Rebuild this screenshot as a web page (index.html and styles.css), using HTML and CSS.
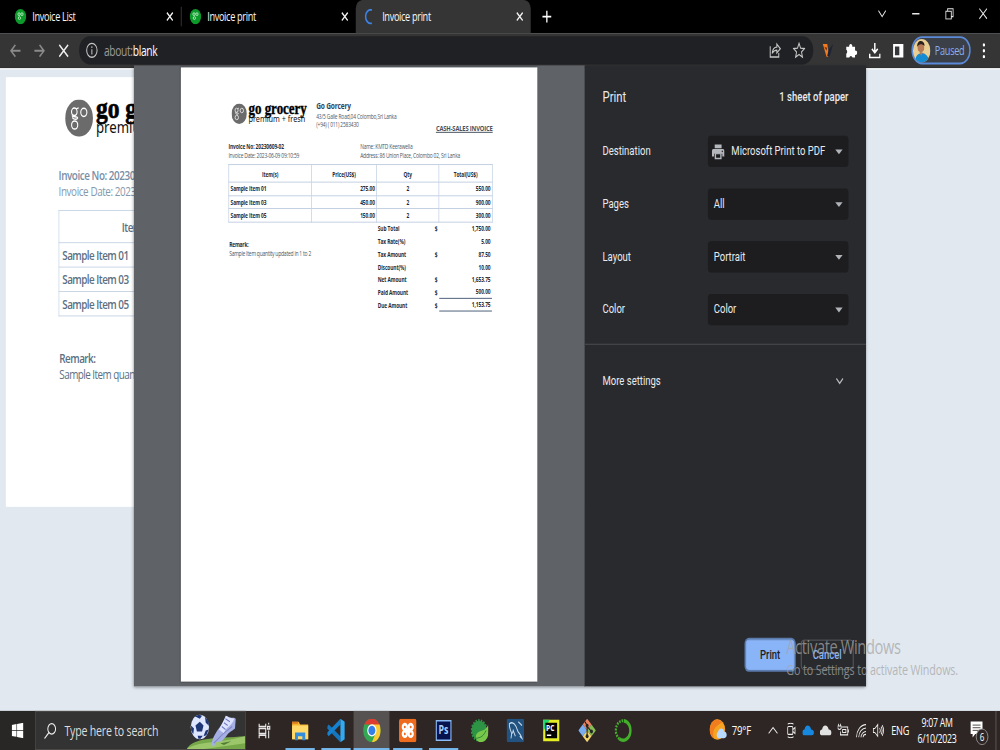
FILE: index.html
```html
<!DOCTYPE html>
<html lang="en">
<head>
    <meta charset="UTF-8">
    <meta name="viewport" content="width=device-width, initial-scale=1.0">
    <title>Invoice print</title>
    <link rel="stylesheet" href="styles.css">
</head>
<body>
    <!-- Shared shapes -->
    <svg class="defs" width="0" height="0">
        <symbol id="mark" viewBox="0 0 38 38">
            <circle cx="19" cy="19" r="19" fill="#6b6b6b"/>
            <g fill="none" stroke="#fff" stroke-width="1.5">
                <circle cx="12.500" cy="12.500" r="3.800"/><circle cx="25.500" cy="13" r="4.200"/><circle cx="13" cy="26" r="4.200"/>
                <path d="M15 9.500l3.500-1M10 16c-2 2 8 1 7 3-2 2-7 1-7-1"/>
            </g>
        </symbol>
        <symbol id="favicon" viewBox="0 0 16 16">
            <circle cx="8" cy="8" r="7.8" fill="#0c9a2a"/>
            <g fill="none" stroke="#bdf0c6" stroke-width="1"><circle cx="6" cy="5.5" r="1.5"/><circle cx="10" cy="5.5" r="1.5"/><circle cx="6.500" cy="9.500" r="1.5"/></g>
        </symbol>
        <symbol id="close" viewBox="0 0 16 16">
            <path d="M4 4l8 8M12 4l-8 8" stroke="#f1f1f1" stroke-width="1.7"/>
        </symbol>
    </svg>

    <div class="desktop">
        <!-- Tabs -->
        <div class="tab-bar">
            <div class="tab">
                <svg class="i16"><use href="#favicon"/></svg><span>Invoice List</span><svg class="i16"><use href="#close"/></svg>
            </div>
            <div class="tab divided">
                <svg class="i16"><use href="#favicon"/></svg><span>Invoice print</span><svg class="i16"><use href="#close"/></svg>
            </div>
            <div class="tab active">
                <svg class="i16" viewBox="0 0 16 16"><path d="M10 1.2A7 7 0 1 0 10 14.8" fill="none" stroke="#3b82e8" stroke-width="2.2"/></svg><span>Invoice print</span><svg class="i16"><use href="#close"/></svg>
            </div>
            <svg class="new-tab" viewBox="0 0 16 16"><path d="M8 2v12M2 8h12" stroke="#fff" stroke-width="1.8"/></svg>
            <div class="window-buttons">
                <svg viewBox="0 0 12 12"><path d="M1 3l5 6 5-6"/></svg>
                <svg viewBox="0 0 12 12"><path d="M1 6h10" stroke-width="1.6"/></svg>
                <svg viewBox="0 0 12 12"><path d="M1 3.500h7.500v8H1zM3.500 3.500V1H11v8H8.500"/></svg>
                <svg viewBox="0 0 12 12"><path d="M.8.8l10.400 10.400M11.200.8L.8 11.200"/></svg>
            </div>
        </div>

        <!-- Address bar -->
        <div class="toolbar">
            <div class="nav">
                <svg class="dim" viewBox="0 0 16 16"><path d="M15 8H2M8 2L2 8l6 6"/></svg>
                <svg class="dim" viewBox="0 0 16 16"><path d="M1 8h13M8 2l6 6-6 6"/></svg>
                <svg viewBox="0 0 16 16"><path d="M2 2l12 12M14 2L2 14"/></svg>
            </div>
            <div class="omnibox">
                <svg class="line" viewBox="0 0 16 16"><circle cx="8" cy="8" r="6.700"/><path d="M8 7v5M8 4v1.700"/></svg>
                <p><span>about:</span>blank</p>
                <svg class="line share" viewBox="0 0 16 16"><path d="M2 4v10.500h11v-4M4.500 11c.5-4 3-6 6-6V2l4.500 4.500-4.500 4v-2.700c-2.500 0-4.500.8-6 3.200z"/></svg>
                <svg class="line" viewBox="0 0 16 16"><path d="M8 1.300l2 4.700 5 .4-3.800 3.300 1.200 4.900L8 12l-4.400 2.600 1.200-4.900L1 6.400 6 6z"/></svg>
            </div>
            <div class="extensions">
                <svg viewBox="0 0 16 16"><path d="M1 1h6l3 13H6z" fill="#f47a20"/><path d="M9 7l6-6-5 14-3-2z" fill="#1c2436"/><path d="M3 4l4 1-1 3z" fill="#703415"/></svg>
                <svg viewBox="0 0 16 16"><path d="M1 4h4a2.200 2.200 0 1 1 4.200 0H13v4a2.200 2.200 0 1 1 0 4v3H9.500a2.200 2.200 0 0 0-4.300 0H1v-4a2.200 2.200 0 0 0 0-4z" fill="#fff"/></svg>
                <svg viewBox="0 0 16 16"><path d="M8 0v9M4 6l4 4 4-4M1 11v4h14v-4" fill="none" stroke="#fff" stroke-width="2"/></svg>
                <svg viewBox="0 0 16 16"><path d="M1 1h14v14H1z" fill="#fff"/><path d="M3.500 3.500h6v9h-6z" fill="#35363a"/></svg>
            </div>
            <div class="profile">
                <svg viewBox="0 0 24 24">
                    <clipPath id="round"><circle cx="12" cy="12" r="12"/></clipPath>
                    <g clip-path="url(#round)"><path d="M0 0h24v24H0z" fill="#e9cf94"/><path d="M3 24c0-7 4-9 9-10 6 1 10 4 10 10z" fill="#158bd2"/><circle cx="11" cy="9" r="4.500" fill="#b77b58"/><path d="M6 8c-1-8 10-8 10-1-3-2-6-2-8-1z" fill="#2a211d"/><path d="M9 13l2 4 3-3z" fill="#b77b58"/></g>
                </svg>
                <span>Paused</span>
            </div>
            <svg class="kebab" viewBox="0 0 4 16"><circle cx="2" cy="2" r="1.700"/><circle cx="2" cy="8" r="1.700"/><circle cx="2" cy="14" r="1.700"/></svg>
        </div>

        <!-- Page behind the print dialog -->
        <div class="page">
            <div class="invoice">
                <svg class="logo" viewBox="0 0 188 40">
                    <use href="#mark" width="38" height="38"/>
                    <text x="42" y="19" class="logo-name" textLength="145" lengthAdjust="spacingAndGlyphs">go grocery</text>
                    <text x="42" y="34" class="logo-tag" textLength="141" lengthAdjust="spacingAndGlyphs">premium + fresh</text>
                </svg>
                <p class="number">Invoice No: 20230609-02</p>
                <p class="date">Invoice Date: 2023-06-09</p>
                <table class="items">
                    <tr><th>Item(s)</th></tr>
                    <tr><td>Sample Item 01</td></tr>
                    <tr><td>Sample Item 03</td></tr>
                    <tr><td>Sample Item 05</td></tr>
                </table>
                <p class="remark">Remark:</p>
                <p class="remark-text">Sample Item quantity updated in 1 to 2</p>
            </div>
        </div>

        <!-- Print dialog -->
        <div class="dialog">
            <div class="preview">
                <div class="sheet">
                    <div class="sheet-head">
                        <svg class="sheet-logo" viewBox="0 0 188 40">
                            <use href="#mark" width="38" height="38"/>
                            <text x="42" y="19" class="logo-name" textLength="145" lengthAdjust="spacingAndGlyphs">go grocery</text>
                            <text x="42" y="35" class="logo-tag" textLength="141" lengthAdjust="spacingAndGlyphs">premium + fresh</text>
                        </svg>
                        <div class="company">
                            <h1>Go Gorcery</h1>
                            <p>43/5 Galle Road,04 Colombo,Sri Lanka</p>
                            <p>(+94) ( 011) 2583430</p>
                        </div>
                        <h2>CASH-SALES INVOICE</h2>
                    </div>
                    <div class="sheet-info">
                        <div>
                            <p><b>Invoice No: 20230609-02</b></p>
                            <p>Invoice Date: 2023-06-09 09:10:59</p>
                        </div>
                        <div>
                            <p>Name: KMTD Keerawella</p>
                            <p>Address: 86 Union Place, Colombo 02, Sri Lanka</p>
                        </div>
                    </div>
                    <table class="sheet-items">
                        <tr><th>Item(s)</th><th>Price(US$)</th><th>Qty</th><th>Total(US$)</th></tr>
                        <tr><td>Sample Item 01</td><td>275.00</td><td>2</td><td>550.00</td></tr>
                        <tr><td>Sample Item 03</td><td>450.00</td><td>2</td><td>900.00</td></tr>
                        <tr><td>Sample Item 05</td><td>150.00</td><td>2</td><td>300.00</td></tr>
                    </table>
                    <div class="sheet-foot">
                        <div class="sheet-remark">
                            <p><b>Remark:</b></p>
                            <p>Sample Item quantity updated in 1 to 2</p>
                        </div>
                        <div class="totals">
                            <span>Sub Total</span><span>$</span><span>1,750.00</span>
                            <span>Tax Rate(%)</span><span></span><span>5.00</span>
                            <span>Tax Amount</span><span>$</span><span>87.50</span>
                            <span>Discount(%)</span><span></span><span>10.00</span>
                            <span>Net Amount</span><span>$</span><span>1,653.75</span>
                            <span>Paid Amount</span><span>$</span><span class="ruled">500.00</span>
                            <span>Due Amount</span><span>$</span><span class="ruled">1,153.75</span>
                        </div>
                    </div>
                </div>
            </div>
            <div class="settings">
                <div class="settings-head"><h3>Print</h3><span>1 sheet of paper</span></div>
                <div class="row">
                    <label>Destination</label>
                    <div class="select">
                        <svg class="printer" viewBox="0 0 18 18"><path d="M4 1h10v4H4zM2 6h14q2 0 2 2v6h-3v-3H3v3H0V8q0-2 2-2z" fill="#b4b7bb"/><path d="M4 10.500h10V17H4z" fill="#b4b7bb"/><path d="M6 11.500h6v4H6z" fill="#1d1d1f"/><circle cx="15" cy="8.500" r=".9" fill="#1d1d1f"/></svg>
                        <span>Microsoft Print to PDF</span><i></i>
                    </div>
                </div>
                <div class="row"><label>Pages</label><div class="select"><span>All</span><i></i></div></div>
                <div class="row"><label>Layout</label><div class="select"><span>Portrait</span><i></i></div></div>
                <div class="row"><label>Color</label><div class="select"><span>Color</span><i></i></div></div>
                <div class="more">
                    <span>More settings</span>
                    <svg viewBox="0 0 12 12"><path d="M1.500 3.500L6 8.500l4.500-5" fill="none" stroke="#b4b7bb" stroke-width="1.500"/></svg>
                </div>
                <div class="actions"><button class="print">Print</button><button class="cancel">Cancel</button></div>
            </div>
        </div>

        <div class="watermark">
            <p class="big">Activate Windows</p>
            <p>Go to Settings to activate Windows.</p>
        </div>

        <!-- Taskbar -->
        <div class="taskbar">
            <div class="start"><svg viewBox="0 0 16 16"><path d="M0 2.300l6.500-.9v6.100H0zM7.300 1.300L16 0v7.500H7.300zM0 8.300h6.500v6.200L0 13.600zM7.300 8.300H16V16l-8.700-1.300z" fill="#fff"/></svg></div>
            <div class="search">
                <svg class="lens" viewBox="0 0 16 16"><circle cx="10" cy="6" r="5"/><path d="M6.500 9.500L.8 15.200"/></svg>
                <span>Type here to search</span>
                <svg class="sport" viewBox="0 0 80 38">
                    <path d="M0 38C10 26 40 27 80 25v13z" fill="#76a749"/><path d="M0 38c16-8 38-5 80-13v7L24 38z" fill="#9bc66a"/>
                    <circle cx="18" cy="15.500" r="12.500" fill="#dde5ff"/>
                    <path d="M18 10l5 4-2 6h-7l-2-6zM11 4.500l6-1.500 4 1-3 3zM25 5l5 5v4l-4-3zM6 14l4 3-1 6-3-4zM15 24.500h7l-3 3h-3zM26 19l4-1-3 6-4 1z" fill="#1f3676"/>
                    <path d="M34 34c0-5 3-9 7-14 5-5 9-8 12-16l4 1c4 2 7 0 10 2l-1 10c-5 3-9 4-12 8l-6 5-8 1-3 5z" fill="#a6afe3"/><path d="M44 18L54 4l4 2 7 1c-3 8-12 8-14 15z" fill="#dce2ff"/><path d="M48 15l5 3M51 11l5 3M53 7l6 3" stroke="#6877bd" stroke-width="1.200"/><path d="M37 32l12-9 13-8" fill="none" stroke="#7c86c4" stroke-width="1.200"/>
                    <path d="M46 32l15-2-10 4z" fill="#527b36"/>
                </svg>
            </div>
            <div class="apps">
                <div class="app"><svg viewBox="0 0 24 24" fill="none" stroke="#e8e8e8" stroke-width="1.500"><path d="M5 5v3h9V5M5 20v-3h9v3M5 10h9v5H5zM18 4v2M18 12v8M16.500 8h3v2.500h-3z"/></svg></div>
                <div class="app open"><svg viewBox="0 0 24 24"><path d="M1 3h9l2 3h11v15H1z" fill="#f5b52e"/><path d="M1 7h22v14H1z" fill="#ffda6b"/><path d="M1 3h8v2H1z" fill="#dd7b20"/><path d="M5 22v-8h14v8h-4v-4H9v4z" fill="#338ddd"/></svg></div>
                <div class="app open"><svg viewBox="0 0 24 24"><path d="M0 8l2-2 16 12v6L0 10z" fill="#1476bf"/><path d="M0 16l2 2L18 6V0L0 14z" fill="#1681cf"/><path d="M18 0l6 3v18l-6 3z" fill="#32a9f0"/></svg></div>
                <div class="app open current"><svg viewBox="0 0 24 24"><circle cx="12" cy="12" r="12" fill="#32a852"/><path d="M1.600 6A12 12 0 0 1 22.400 6L12 12z" fill="#dc3d30"/><path d="M12 6h10.400A12 12 0 0 1 12 24l5-9z" fill="#fccb2f"/><path d="M1.600 6L7 15l5-9z" fill="#32a852"/><circle cx="12" cy="12" r="6.300" fill="#fff"/><circle cx="12" cy="12" r="4.800" fill="#347fe8"/></svg></div>
                <div class="app open"><svg viewBox="0 0 24 24"><rect width="24" height="24" rx="3" fill="#ef6b1d"/><g fill="none" stroke="#fff" stroke-width="3"><circle cx="8" cy="8.500" r="2.800"/><circle cx="16" cy="8.500" r="2.800"/><circle cx="8" cy="15.500" r="2.800"/><circle cx="16" cy="15.500" r="2.800"/></g><path d="M9 10l6 4M15 10l-6 4" stroke="#fff" stroke-width="3"/></svg></div>
                <div class="app open"><svg viewBox="0 0 24 24"><path d="M2 2h20v20H2z" fill="#06134f" stroke="#8bbcf5" stroke-width="1.500"/><text x="5" y="16" class="ps">Ps</text></svg></div>
                <div class="app"><svg viewBox="0 0 24 24"><circle cx="11.500" cy="12" r="10" fill="#2d9446" stroke="#2d9446" stroke-width="3" stroke-dasharray="2 1.500"/><path d="M24 6c2 12-2 18-11 18-8-1-8-9-1-11 6-1 9-2 12-7z" fill="#78c64a"/><path d="M6 20c8 0 12-3 15-8" fill="none" stroke="#287c38"/></svg></div>
                <div class="app"><svg viewBox="0 0 24 24"><rect width="24" height="24" rx="2" fill="#22527f"/><path d="M6 20l1-5C5 11 3 8 4 5c5-3 9 2 11 7 1 3 4 3 6 8l-3-2M8 15l1-3 3 6M16 3l5 4" fill="none" stroke="#c7dcec" stroke-width="1.300"/></svg></div>
                <div class="app"><svg viewBox="0 0 24 24"><path d="M1 1h22v22H1z" fill="#e5ed24"/><path d="M1 1h9L1 13z" fill="#22d76c"/><path d="M4 4h16v16H4z" fill="#050505"/><text x="5" y="13" class="pc">PC</text><path d="M6 17h6" stroke="#fff" stroke-width="1.500"/></svg></div>
                <div class="app"><svg viewBox="0 0 24 24"><path d="M12 0l6 6-6 6-6-6z" fill="#ee8260"/><path d="M6 6l6 6-6 6-6-6z" fill="#78adf2"/><path d="M18 6l6 6-6 6-6-6z" fill="#86bd56"/><path d="M12 12l6 6-6 6-6-6z" fill="#f4d66d"/><path d="M9 3l3 4v12M12 8l6 5" stroke="#252525" fill="none" stroke-width="1.500"/><g fill="#252525"><circle cx="12" cy="7" r="2"/><circle cx="12" cy="18" r="2"/><circle cx="18" cy="13" r="2"/></g></svg></div>
                <div class="app"><svg viewBox="0 0 24 24" fill="none" stroke="#43b02a"><path d="M13 2a10 10 0 1 1-6 18.500" stroke-width="3.500"/><path d="M12 2A10 10 0 0 0 7 20.500" stroke-width="3" stroke-dasharray="2 1.300"/></svg></div>
            </div>
            <div class="tray">
                <svg class="sun" viewBox="0 0 24 24"><circle cx="11" cy="11" r="10.500" fill="#f5a321"/><path d="M11 .500a10.500 10.500 0 0 0-5 19.700C3 11 9 7 18 3.500z" fill="#f27d1e"/><path d="M12 20a4 4 0 0 1 0-7c2-5 8-3 8 0 5 0 5 7 0 7z" fill="#b8d9fb"/></svg>
                <span class="temp">79°F</span>
                <svg class="caret" viewBox="0 0 16 16"><path d="M2 11l6-6 6 6"/></svg>
                <svg viewBox="0 0 16 16"><rect x="4" y="4" width="7" height="8" rx="1"/><path d="M11 7l3-2v6l-3-2M4 1.500q4-2 8 0M4 14.500q4 2 8 0"/></svg>
                <svg viewBox="0 0 16 16"><path d="M3 13a3 3 0 0 1 0-6C4 1 11 2 12 7c5 0 5 6 1 6z" fill="#1688df" stroke="none"/></svg>
                <svg viewBox="0 0 16 16"><path d="M3 13a3 3 0 0 1 0-6C4 1 11 2 12 7c5 0 5 6 1 6z" fill="#e2e2e2" stroke="none"/></svg>
                <svg viewBox="0 0 16 16"><path d="M6 4.500h8v8H4V9M15 7v3M1.500 1v2M4 1v2M.5 3.500H5V6q-2.300 2-4.500 0zM7 7v3h4.500V7z"/></svg>
                <svg viewBox="0 0 16 16"><path d="M2 15A13 13 0 0 1 15 2M5 15A10 10 0 0 1 15 5.500M8 15a7 7 0 0 1 7-6M11 15q0-3 4-3"/></svg>
                <svg viewBox="0 0 16 16"><path d="M1 6h2l4-4v12l-4-4H1zM9.500 5.500q2 2.500 0 5M11.500 4q3 4 0 8M13 2.500q4 5.500 0 11"/></svg>
                <span class="lang">ENG</span>
                <div class="clock"><span>9:07 AM</span><span>6/10/2023</span></div>
                <div class="notify">
                    <svg viewBox="0 0 20 20"><path d="M1 1h18v14H8l-4 4v-4H1z" fill="#fff" stroke="none"/><path d="M4 5h12M4 8h12M4 11h12" stroke="#332c2a"/></svg>
                    <span class="badge">6</span>
                </div>
            </div>
        </div>
    </div>
</body>
</html>
```
FILE: styles.css
```css
* {
    margin: 0;
    padding: 0;
    box-sizing: border-box;
}

html {
    overflow: hidden;
}

body {
    width: 1000px;
    height: 750px;
    overflow: clip;
    background-color: #e1e8f0;
    font-family: "Open Sans", "Noto Sans", sans-serif;
}

.defs {
    position: absolute;
}

/* 1366x768 desktop fitted to a 4:3 window */
.desktop {
    position: relative;
    width: 1366px;
    height: 768px;
    transform: scale(0.73206, 0.97656);
    transform-origin: 0 0;
    display: flex;
    flex-direction: column;
    overflow: hidden;
}

svg {
    display: block;
    flex: none;
}

.i16 {
    width: 16px;
    height: 16px;
}

/* Tabs */
.tab-bar {
    height: 34px;
    background-color: #000;
    display: flex;
    align-items: center;
    padding-left: 8px;
    color: #f8f8f8;
    font-size: 12.5px;
    font-weight: 500;
}

.tab {
    width: 239px;
    height: 34px;
    display: flex;
    align-items: center;
    padding: 0 7px 0 12px;
}

.tab span {
    flex: 1;
    padding-left: 8px;
    letter-spacing: -0.45px;
}

.tab.divided {
    background: linear-gradient(#444, #444) 0 50% / 1px 20px no-repeat;
}

.tab.active {
    background-color: #353535;
    border-radius: 9px 9px 0 0;
}

.new-tab {
    width: 16px;
    height: 16px;
    margin-left: 14px;
}

.window-buttons {
    display: flex;
    gap: 34px;
    margin-left: auto;
    padding: 0 17px 6px 0;
}

.window-buttons svg {
    width: 12px;
    height: 12px;
    fill: none;
    stroke: #e8e8e8;
    stroke-width: 1.2;
}

/* Address bar */
.toolbar {
    height: 36px;
    flex: none;
    background-color: #353535;
    display: flex;
    align-items: center;
    border-bottom: 1px solid #2b2c2b;
}

.nav {
    display: flex;
    gap: 17px;
    width: 108px;
    padding-left: 13px;
}

.nav svg {
    width: 16px;
    height: 16px;
    fill: none;
    stroke: #eee;
    stroke-width: 1.9;
}

.nav .dim {
    stroke: #8a8a8a;
}

.omnibox {
    width: 1003px;
    height: 29px;
    border-radius: 15px;
    background-color: #202124;
    display: flex;
    align-items: center;
    gap: 16px;
    padding: 0 11px 0 9px;
}

.omnibox p {
    flex: 1;
    margin-left: -8px;
    font-size: 14px;
    font-weight: 500;
    letter-spacing: -0.45px;
    color: #fff;
}

.omnibox p span {
    color: #999a9c;
}

.line {
    width: 17px;
    height: 17px;
    fill: none;
    stroke: #c4c7c5;
    stroke-width: 1.3;
}

.extensions {
    display: flex;
    gap: 16px;
    margin-left: 12px;
}

.extensions svg {
    width: 16px;
    height: 16px;
}

.profile {
    width: 81px;
    height: 29px;
    margin-left: 10px;
    border: 2px solid #5b8bd8;
    border-radius: 15px;
    background-color: #3b3f48;
    display: flex;
    align-items: center;
    gap: 6px;
    color: #86aff0;
    font-size: 12.5px;
    letter-spacing: -0.4px;
}

.profile svg {
    width: 24px;
    height: 24px;
}

.kebab {
    width: 4px;
    height: 16px;
    margin-left: 16px;
    fill: #fff;
}

/* Page behind the dialog */
.page {
    height: 658px;
    flex: none;
    background-color: #e1e8f0;
    border-top: 1px solid #fff;
    padding: 8px;
}

.invoice {
    width: 1000px;
    height: 440px;
    background-color: #fff;
    padding: 23px 0 0 72px;
    color: #5c6f83;
    font-size: 13.500px;
    letter-spacing: -0.72px;
}

.logo {
    width: 188px;
    height: 40px;
    margin-left: 9px;
    overflow: visible;
}

.logo-name {
    font: bold 30px "Liberation Serif", serif;
    letter-spacing: 0;
    fill: #000;
    stroke: #000;
    stroke-width: 0.7px;
}

.logo-tag {
    font: 17px "Noto Sans", sans-serif;
    letter-spacing: 0;
    fill: #111;
}

.invoice .number {
    margin-top: 29px;
    line-height: 17px;
    font-weight: 600;
    letter-spacing: -0.6px;
    color: #778da6;
}

.invoice .date {
    line-height: 16px;
    letter-spacing: -0.55px;
    color: #8698ab;
}

.items {
    width: 284px;
    margin-top: 11px;
    border-collapse: collapse;
    font-weight: 600;
}

.items th,
.items td {
    height: 25px;
    border: 1px solid #c9d6e6;
    padding-left: 4px;
}

.items th {
    height: 33px;
    padding: 1px 0 0 4px;
    font-weight: 600;
    text-indent: -75px;
}

.invoice .remark {
    margin-top: 35px;
    line-height: 16px;
    font-weight: 600;
}

.invoice .remark-text {
    line-height: 16px;
}

.invoice .remark,
.invoice .remark-text {
    padding-left: 1px;
}

/* Print dialog, laid over the page */
.dialog {
    position: absolute;
    left: 183px;
    top: 67px;
    width: 1000px;
    height: 636px;
    display: flex;
    box-shadow: 0 2px 4px rgba(0, 0, 0, 0.5);
}

.preview {
    width: 616px;
    background-color: #5f6368;
    border-right: 1px solid #44474b;
    padding: 2px 0 0 64px;
}

.sheet {
    width: 487px;
    height: 629px;
    background-color: #fff;
    box-shadow: 0 0 2px #333;
    padding: 33px 61px 0 65px;
    color: #4c5865;
    font-size: 7px;
    line-height: 9px;
}

.sheet b {
    color: #26313f;
}

.sheet-head {
    display: flex;
    height: 44px;
}

.sheet-logo {
    width: 104px;
    height: 22px;
    margin: 4px 12px 0 4px;
    overflow: visible;
}

.company {
    width: 150px;
    white-space: nowrap;
}

.company h1 {
    font-size: 9px;
    font-weight: 700;
    letter-spacing: -0.25px;
    line-height: 14px;
    color: #30465c;
}

.company p {
    line-height: 8px;
    font-size: 6.6px;
    letter-spacing: -0.2px;
}

.sheet-head h2 {
    font-size: 8px;
    letter-spacing: -0.25px;
    font-weight: 700;
    white-space: nowrap;
    margin: 24px 0 0 auto;
    text-decoration: underline;
    color: #47525e;
}

.sheet-info {
    display: grid;
    grid-template-columns: 180px 180px;
    white-space: nowrap;
    font-size: 6.7px;
    letter-spacing: -0.25px;
}

.sheet-info b {
    letter-spacing: -0.15px;
}

.sheet-items {
    width: 361px;
    margin-top: 4px;
    border-collapse: collapse;
    table-layout: fixed;
    font-weight: 700;
    color: #222d3a;
    font-size: 6.6px;
    letter-spacing: -0.12px;
}

.sheet-items th,
.sheet-items td {
    height: 13.500px;
    border: 1px solid #c3d0e3;
    padding: 1px 2px 0;
    text-align: right;
}

.sheet-items th {
    height: 18px;
    text-align: center;
}

.sheet-items th:nth-child(1) { width: 113px; }
.sheet-items th:nth-child(2) { width: 89px; }
.sheet-items th:nth-child(3) { width: 85px; }

.sheet-items td:nth-child(1) {
    text-align: left;
}

.sheet-items td:nth-child(3) {
    text-align: center;
}

.sheet-foot {
    display: flex;
}

.sheet-remark {
    width: 204px;
    padding: 18px 0 0 1px;
    letter-spacing: -0.3px;
    font-size: 6.8px;
}

.totals {
    display: grid;
    grid-template-columns: 78px 5px 73px;
    grid-auto-rows: 13px;
    align-items: center;
    font-weight: 700;
    color: #222d3a;
    font-size: 6.6px;
    letter-spacing: -0.12px;
}

.totals span:nth-child(3n) {
    margin-left: 1px;
    padding: 1px 2px 0 0;
    text-align: right;
    line-height: 12px;
}

.totals .ruled {
    border-bottom: 1px solid #4b5d78;
}

/* Settings column */
.settings {
    width: 384px;
    background-color: #292a2d;
    padding: 19px 24px 0 24px;
    display: flex;
    flex-direction: column;
    color: #e8eaed;
    font: 13px Roboto, sans-serif;
}

.settings-head {
    display: flex;
    justify-content: space-between;
    align-items: center;
    height: 24px;
    margin-bottom: 18px;
    font-weight: 500;
}

.settings-head h3 {
    padding-top: 1px;
    font-size: 15.500px;
    font-weight: 400;
}

.row {
    height: 54px;
    display: flex;
    align-items: center;
    justify-content: space-between;
}

.row label,
.select span,
.more span {
    padding-bottom: 1px;
}

.select {
    width: 192px;
    height: 32px;
    border-radius: 4px;
    background-color: #1d1d1f;
    display: flex;
    align-items: center;
    padding: 0 8px 0 8px;
    white-space: nowrap;
}

.select span {
    flex: 1;
}

.select i {
    border: 5px solid transparent;
    border-top-color: #b0b3b7;
    border-bottom: 0;
}

.printer {
    width: 18px;
    height: 17px;
    margin: 0 9px 0 -3px;
}

.more {
    margin: 8px -24px 0;
    padding: 0 30px 0 24px;
    height: 74px;
    border-top: 1px solid #4b4d50;
    display: flex;
    align-items: center;
    justify-content: space-between;
}

.more svg {
    width: 12px;
    height: 12px;
}

.actions {
    display: flex;
    justify-content: flex-end;
    gap: 9px;
    margin: auto -7px 17px 0;
}

.actions button {
    width: 72px;
    height: 31px;
    border: 1px solid #5f6368;
    border-radius: 4px;
    font: 500 13px Roboto, sans-serif;
}

.actions .print {
    width: 66px;
    background-color: #8ab4f8;
    border-color: #8ab4f8;
    color: #202124;
    box-shadow: 0 0 0 2px #5b7bad;
}

.actions .cancel {
    background: none;
    color: #8ab4f8;
}

/* Windows activation notice */
.watermark {
    position: absolute;
    left: 1074px;
    top: 649px;
    color: rgba(165, 165, 165, 0.75);
    font-size: 14.700px;
    line-height: 18px;
    letter-spacing: -0.17px;
    white-space: nowrap;
}

.watermark .big {
    font-size: 20px;
    line-height: 27px;
    letter-spacing: -0.5px;
}

/* Taskbar */
.taskbar {
    height: 40px;
    flex: none;
    background-color: #2e2624;
    display: flex;
    color: #fff;
}

.start {
    width: 48px;
    display: flex;
    align-items: center;
    justify-content: center;
    background-color: #292725;
}

.start svg {
    width: 16px;
    height: 16px;
}

.search {
    width: 288px;
    border: 1px solid #4a4947;
    background-color: #333;
    display: flex;
    align-items: center;
    padding-left: 11px;
    color: #ddd;
    font-size: 14.500px;
    letter-spacing: -0.28px;
}

.search span {
    margin-left: 11px;
    white-space: nowrap;
}

.lens {
    width: 17px;
    height: 17px;
    fill: none;
    stroke: #eee;
    stroke-width: 1.3;
}

.sport {
    width: 80px;
    height: 38px;
    margin-left: auto;
}

.apps {
    display: flex;
}

.app {
    width: 49px;
    display: flex;
    align-items: center;
    justify-content: center;
}

.app svg {
    width: 24px;
    height: 24px;
}

.app.open {
    background: linear-gradient(#76b9ed, #76b9ed) 50% 100% / 40px 2px no-repeat;
}

.app.current {
    background-color: #575252;
    background-size: 49px 2px;
}

.ps {
    font: bold 12px "Open Sans", sans-serif;
    fill: #a6d1ff;
}

.pc {
    font: bold 9px "Open Sans", sans-serif;
    fill: #fff;
}

.tray {
    display: flex;
    align-items: center;
    gap: 8px;
    margin-left: auto;
    padding-right: 5px;
    font-size: 13px;
}

.tray svg {
    width: 16px;
    height: 16px;
    fill: none;
    stroke: #eee;
    stroke-width: 1.1;
}

.tray .sun {
    width: 24px;
    height: 24px;
    margin-right: -2px;
    stroke: none;
}

.temp {
    width: 41px;
    letter-spacing: -0.2px;
}

.lang {
    margin-left: 1px;
    font-size: 12.500px;
    letter-spacing: -0.3px;
}

.clock {
    width: 60px;
    margin-right: 3px;
    display: flex;
    flex-direction: column;
    text-align: center;
    font-size: 12px;
    line-height: 17px;
    letter-spacing: -0.4px;
}

.notify {
    position: relative;
    width: 40px;
    height: 40px;
    padding: 10px 0 0 4px;
    border-right: 1px solid #6c6866;
}

.notify svg {
    width: 18px;
    height: 18px;
}

.badge {
    position: absolute;
    left: 12px;
    top: 18px;
    width: 17px;
    height: 17px;
    border: 1px solid #999;
    border-radius: 50%;
    background-color: #2e2624;
    text-align: center;
    font-size: 11px;
    line-height: 15px;
}
```
